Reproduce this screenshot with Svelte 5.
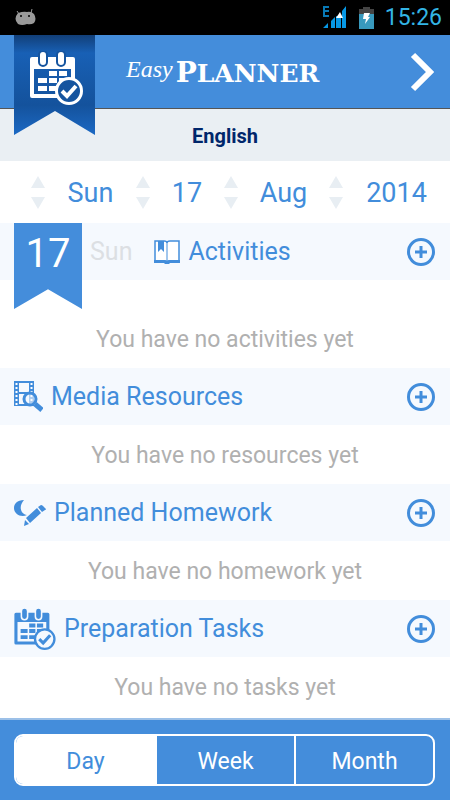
<script>
  const sections = [
    { id: "activities", title: "Activities", empty: "You have no activities yet" },
    { id: "media", title: "Media Resources", empty: "You have no resources yet" },
    { id: "homework", title: "Planned Homework", empty: "You have no homework yet" },
    { id: "tasks", title: "Preparation Tasks", empty: "You have no tasks yet" },
  ];

  const parts = [
    { name: "weekday", value: "Sun" },
    { name: "day", value: "17" },
    { name: "month", value: "Aug" },
    { name: "year", value: "2014" },
  ];

  const views = ["Day", "Week", "Month"];
  let view = "Day";
</script>

{#snippet calendar()}
  <path fill-rule="evenodd" d="M2 6h41a2 2 0 0 1 2 2v37a2 2 0 0 1-2 2H2a2 2 0 0 1-2-2V8a2 2 0 0 1 2-2zM4 18v25h37V18z" />
  <rect class="ring" x="9" y="0" width="8" height="15" rx="4" />
  <rect class="ring" x="27" y="0" width="8" height="15" rx="4" />
  <path d="M19 20h8v5h-8zM29 20h8v5h-8zM8 27h9v5H8zM19 27h8v5h-8zM29 27h8v5h-8zM8 35h9v5H8zM19 35h8v5h-8z" />
  <circle class="disc" cx="39" cy="40" r="12.500" />
  <path class="tick" d="M32 40l5 5 9-10" />
{/snippet}

<div class="app">
  <div class="status">
    <svg class="droid" width="22" height="17" viewBox="0 0 22 17">
      <path d="M4 5L2 2M16 4l1-4" stroke="#999" />
      <path d="M3 4Q9 2 12 3q4-1 7 2 3 5 0 9-3 2-7 1-5 2-9 0-5-5 0-11z" fill="#999" />
      <circle cx="6" cy="7" r="1" />
      <circle cx="14" cy="7" r="1" />
    </svg>
    <svg class="signal" width="23" height="23" viewBox="0 0 23 23">
      <path d="M6 1H1v9h5M1 5h5" fill="none" stroke="#0879b5" stroke-width="2" />
      <path d="M0 22h5v-5zM8 22h4V11l-4 4zM13 22h5V10h-5zM19 22h4V0l-4 5z" fill="#0798e5" />
      <path d="M13 12l4-6 3 6z" fill="#fff" />
    </svg>
    <svg class="battery" width="15" height="22" viewBox="0 0 15 22">
      <path d="M0 2h4V0h7v2h4v6H0z" fill="#444" />
      <path d="M0 7h15v15H0z" fill="#3899bd" />
      <path d="M5 6h6l-2 4h2l-5 7 1-5H4z" fill="#fff" />
    </svg>
    <span class="clock">15:26</span>
  </div>

  <header>
    <svg class="ribbon" width="81" height="100" viewBox="0 0 81 100">
      <defs>
        <linearGradient id="fold" x1="0" y1="0" x2="0" y2="1">
          <stop offset="0" stop-color="#123f78" />
          <stop offset="0.18" stop-color="#1860b5" />
          <stop offset="0.7" stop-color="#14529c" />
          <stop offset="1" stop-color="#1c69c4" />
        </linearGradient>
      </defs>
      <path d="M0 0h81v100L41 76 0 100z" fill="url(#fold)" />
      <svg class="badge" x="16" y="16" width="53" height="54" viewBox="0 0 53 54">
        {@render calendar()}
      </svg>
    </svg>
    <h1><em>Easy</em> <span>P<small>LANNER</small></span></h1>
    <button class="next" aria-label="Next">
      <svg width="24" height="40" viewBox="0 0 24 40">
        <path d="M3 3l17 17L3 37" fill="none" stroke="#fff" stroke-width="6" />
      </svg>
    </button>
  </header>

  <h2 class="subject">English</h2>

  <div class="date">
    {#each parts as part}
      <div class="part">
        <div class="arrows">
          <button aria-label="Next {part.name}"><svg width="14" height="12"><path d="M7 0l7 12H0z" /></svg></button>
          <button aria-label="Previous {part.name}"><svg width="14" height="12"><path d="M0 0h14L7 12z" /></svg></button>
        </div>
        <span>{part.value}</span>
      </div>
    {/each}
  </div>

  <main>
    {#each sections as section, i}
      <section class:first={i === 0}>
        <div class="bar">
          {#if i === 0}
            <div class="flag">17</div>
            <span class="weekday">Sun</span>
          {/if}

          {#if section.id === "activities"}
            <svg class="icon" width="26" height="24" viewBox="0 0 26 24">
              <path d="M1 1h9q3 0 3 2 0-2 3-2h9v20h-9q-3 0-3 1 0-1-3-1H1z" fill="#fff" stroke="#428ddb" stroke-width="1.5" />
              <path d="M0 20h10q3 0 3 1 0-1 3-1h10v3H16l-1 1h-4l-1-1H0zM4 1h6v11l-3-3-3 3z" />
              <path d="M13 3v18" stroke="#428ddb" />
            </svg>
          {:else if section.id === "media"}
            <svg class="icon" width="29" height="31" viewBox="0 0 29 31">
              <path fill-rule="evenodd" d="M0 0h20v25H0zM5 2v9h10V2zM5 13v10h10V13z" />
              <path d="M2.500 2v22M17.500 2v22" stroke="#fff" stroke-width="2" stroke-dasharray="2 2" />
              <circle cx="16" cy="18" r="6" fill="#f5f9fe" fill-opacity="0.600" stroke="#428ddb" stroke-width="3" />
              <path d="M21 23l7 6" stroke="#428ddb" stroke-width="5" />
            </svg>
          {:else if section.id === "homework"}
            <svg class="icon" width="32" height="28" viewBox="0 0 32 28">
              <path d="M10 1C3 1 0 5 0 9c0 6 7 10 13 7C7 15 4 8 10 1z" />
              <path d="M12 19L23 9l4 5-11 10zM24 8l3-2q1 0 2 1l3 3q0 1-1 1l-3 2zM11 21l4 4-5 2z" />
            </svg>
          {:else}
            <svg class="icon" width="42" height="42" viewBox="0 0 53 54">
              {@render calendar()}
            </svg>
          {/if}

          <h3>{section.title}</h3>
          <button class="add" aria-label="Add to {section.title}">
            <svg width="28" height="28" viewBox="0 0 28 28">
              <circle cx="14" cy="14" r="12.500" />
              <path d="M14 8v12M8 14h12" />
            </svg>
          </button>
        </div>
        <p>{section.empty}</p>
      </section>
    {/each}
  </main>

  <footer>
    <div class="tabs">
      {#each views as name}
        <button class:active={view === name} on:click={() => (view = name)}>{name}</button>
      {/each}
    </div>
  </footer>
</div>

<style>
  :global(body) {
    margin: 0;
    background: #fff;
  }

  .app {
    min-height: 100vh;
    display: flex;
    flex-direction: column;
    font-family: Roboto, "Liberation Sans", sans-serif;
    color: #428ddb;
  }

  svg {
    display: block;
    flex: none;
  }

  h1, h2, h3, p {
    margin: 0;
    font-weight: 400;
  }

  button {
    padding: 0;
    border: 0;
    background: none;
    font: inherit;
    color: inherit;
    cursor: pointer;
  }

  .status {
    display: flex;
    align-items: center;
    height: 35px;
    padding: 0 8px 0 15px;
    background: #000;
  }

  .signal {
    margin-left: auto;
  }

  .battery {
    margin: 0 11px 0 13px;
  }

  .clock {
    font-size: 23px;
    color: #33b5e5;
  }

  header {
    position: relative;
    display: flex;
    align-items: center;
    height: 73px;
    padding: 0 16px 0 126px;
    background: #448ddb;
    border-bottom: 1px solid #555;
  }

  .ribbon {
    position: absolute;
    left: 14px;
    top: 0;
    fill: #fff;
  }

  .badge {
    --back: #15549f;
    --tick: #fff;
  }

  .ring {
    stroke: var(--back);
    stroke-width: 2;
  }

  .disc {
    fill: var(--back);
    stroke: var(--tick);
    stroke-width: 3;
  }

  .tick {
    fill: none;
    stroke: var(--tick);
    stroke-width: 4;
  }

  h1 {
    display: flex;
    align-items: center;
    gap: 3px;
    padding-top: 2px;
    color: #fff;
  }

  h1 em {
    padding-bottom: 6px;
    font: italic 24px "Liberation Serif", serif;
  }

  h1 span {
    font: bold 28px "DejaVu Serif", serif;
  }

  h1 small {
    font-size: 25px;
  }

  .next {
    margin-left: auto;
  }

  .subject {
    padding-top: 2px;
    background: #eaeff3;
    color: #00266b;
    font-size: 20px;
    font-weight: 700;
    line-height: 50px;
    text-align: center;
  }

  .date {
    display: grid;
    grid-template-columns: 105fr 88fr 105fr 121fr;
    height: 62px;
    padding-left: 31px;
    font-size: 27px;
  }

  .part {
    display: flex;
    align-items: center;
  }

  .part span {
    flex: 1;
    padding-top: 2px;
    text-align: center;
  }

  .arrows {
    display: grid;
    gap: 9px;
    fill: #e8eef3;
  }

  .bar {
    position: relative;
    display: flex;
    align-items: center;
    height: 57px;
    padding: 0 15px 0 14px;
    background: #f5f9fe;
    --back: #f5f9fe;
    --tick: #428ddb;
  }

  .icon {
    fill: #428ddb;
    margin-right: 8px;
  }

  .flag {
    position: absolute;
    left: 14px;
    top: 0;
    width: 68px;
    height: 86px;
    background: #448ddb;
    clip-path: polygon(0 0, 100% 0, 100% 100%, 50% 77%, 0 100%);
    color: #fff;
    font-size: 40px;
    line-height: 62px;
    text-align: center;
  }

  .weekday {
    margin: 0 22px 0 76px;
    color: #dcdfe3;
    font-size: 25px;
  }

  h3 {
    font-size: 25px;
  }

  .add {
    margin-left: auto;
  }

  .add svg {
    fill: none;
    stroke: #428ddb;
    stroke-width: 3;
  }

  p {
    padding-top: 2px;
    color: #b0b0b0;
    font-size: 23px;
    line-height: 57px;
    text-align: center;
  }

  .first p {
    padding-top: 31px;
  }

  footer {
    margin-top: auto;
    padding: 14px 15px 14px 14px;
    background: #448ddb;
    border-top: 2px solid #9cc0e8;
  }

  .tabs {
    display: grid;
    grid-template-columns: 1fr 1fr 1fr;
    border: 2px solid #fff;
    border-radius: 9px;
    overflow: hidden;
  }

  .tabs button {
    height: 48px;
    padding-top: 2px;
    color: #fff;
    font-size: 23px;
  }

  .tabs button + button {
    border-left: 2px solid #fff;
  }

  .tabs .active {
    background: #fff;
    color: #428ddb;
  }
</style>
